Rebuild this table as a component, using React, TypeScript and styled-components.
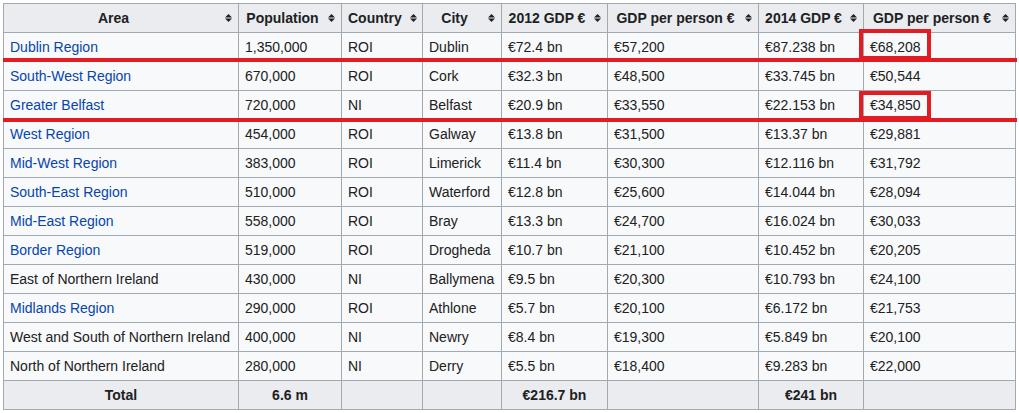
import React from 'react';
import styled, { createGlobalStyle } from 'styled-components';

const GlobalStyle = createGlobalStyle`
  html, body {
    margin: 0;
    padding: 0;
    background: #ffffff;
  }
  body {
    font-family: "Liberation Sans", Arial, sans-serif;
    font-size: 14px;
    color: #202122;
  }
`;

type Row = {
  area: string;
  link: boolean;
  pop: string;
  country: string;
  city: string;
  gdp12: string;
  pp12: string;
  gdp14: string;
  pp14: string;
};

const rows: Row[] = [
  { area: 'Dublin Region', link: true, pop: '1,350,000', country: 'ROI', city: 'Dublin', gdp12: '€72.4 bn', pp12: '€57,200', gdp14: '€87.238 bn', pp14: '€68,208' },
  { area: 'South-West Region', link: true, pop: '670,000', country: 'ROI', city: 'Cork', gdp12: '€32.3 bn', pp12: '€48,500', gdp14: '€33.745 bn', pp14: '€50,544' },
  { area: 'Greater Belfast', link: true, pop: '720,000', country: 'NI', city: 'Belfast', gdp12: '€20.9 bn', pp12: '€33,550', gdp14: '€22.153 bn', pp14: '€34,850' },
  { area: 'West Region', link: true, pop: '454,000', country: 'ROI', city: 'Galway', gdp12: '€13.8 bn', pp12: '€31,500', gdp14: '€13.37 bn', pp14: '€29,881' },
  { area: 'Mid-West Region', link: true, pop: '383,000', country: 'ROI', city: 'Limerick', gdp12: '€11.4 bn', pp12: '€30,300', gdp14: '€12.116 bn', pp14: '€31,792' },
  { area: 'South-East Region', link: true, pop: '510,000', country: 'ROI', city: 'Waterford', gdp12: '€12.8 bn', pp12: '€25,600', gdp14: '€14.044 bn', pp14: '€28,094' },
  { area: 'Mid-East Region', link: true, pop: '558,000', country: 'ROI', city: 'Bray', gdp12: '€13.3 bn', pp12: '€24,700', gdp14: '€16.024 bn', pp14: '€30,033' },
  { area: 'Border Region', link: true, pop: '519,000', country: 'ROI', city: 'Drogheda', gdp12: '€10.7 bn', pp12: '€21,100', gdp14: '€10.452 bn', pp14: '€20,205' },
  { area: 'East of Northern Ireland', link: false, pop: '430,000', country: 'NI', city: 'Ballymena', gdp12: '€9.5 bn', pp12: '€20,300', gdp14: '€10.793 bn', pp14: '€24,100' },
  { area: 'Midlands Region', link: true, pop: '290,000', country: 'ROI', city: 'Athlone', gdp12: '€5.7 bn', pp12: '€20,100', gdp14: '€6.172 bn', pp14: '€21,753' },
  { area: 'West and South of Northern Ireland', link: false, pop: '400,000', country: 'NI', city: 'Newry', gdp12: '€8.4 bn', pp12: '€19,300', gdp14: '€5.849 bn', pp14: '€20,100' },
  { area: 'North of Northern Ireland', link: false, pop: '280,000', country: 'NI', city: 'Derry', gdp12: '€5.5 bn', pp12: '€18,400', gdp14: '€9.283 bn', pp14: '€22,000' },
];

const headers = ['Area', 'Population', 'Country', 'City', '2012 GDP €', 'GDP per person €', '2014 GDP €', 'GDP per person €'];
const widths = [235, 103, 81, 79, 106, 151, 105, 152];
const totals = ['Total', '6.6 m', '', '', '€216.7 bn', '', '€241 bn', ''];

const Page = styled.div`
  position: relative;
  padding: 3px 0 0 3px;
`;

const Table = styled.table`
  border-collapse: collapse;
  table-layout: fixed;
  width: 1013px;
  background: #f8f9fa;
  border: 1px solid #a2a9b1;
`;

const Col = styled.col<{ $w: number }>`
  width: ${(p) => p.$w}px;
`;

const Th = styled.th`
  background: #eaecf0;
  border: 1px solid #a2a9b1;
  padding: 3px 6px;
  height: 22px;
  line-height: 22px;
  font-weight: bold;
  white-space: nowrap;
`;

const HeadInner = styled.div`
  display: flex;
  align-items: center;
`;

const HeadLabel = styled.span`
  flex: 1;
  text-align: center;
`;

const SortIcon = styled.svg`
  flex: none;
  width: 7px;
  height: 8px;
  margin-left: 8px;
`;

const Td = styled.td`
  border: 1px solid #a2a9b1;
  padding: 3px 6px;
  height: 22px;
  line-height: 22px;
  white-space: nowrap;
  overflow: hidden;
`;

const TotalCell = styled.th`
  background: #eaecf0;
  border: 1px solid #a2a9b1;
  padding: 3px 6px;
  height: 22px;
  line-height: 22px;
  font-weight: bold;
  text-align: center;
`;

const Link = styled.a`
  color: #0645ad;
  text-decoration: none;
`;

const RedLine = styled.div<{ $top: number }>`
  position: absolute;
  left: 3px;
  top: ${(p) => p.$top}px;
  width: 1014px;
  height: 4px;
  background: #e31b23;
`;

const RedBox = styled.div<{ $top: number; $h: number }>`
  position: absolute;
  left: 859px;
  top: ${(p) => p.$top}px;
  width: 72px;
  height: ${(p) => p.$h}px;
  box-sizing: border-box;
  border: 4px solid #e31b23;
`;

function Sort() {
  return (
    <SortIcon viewBox="0 0 7 8">
      <polygon points="0,3.4 3.5,0 7,3.4" fill="#202122" />
      <polygon points="0,4.6 3.5,8 7,4.6" fill="#202122" />
    </SortIcon>
  );
}

export default function App() {
  return (
    <>
      <GlobalStyle />
      <Page>
        <Table>
          <colgroup>
            {widths.map((w, i) => (
              <Col key={i} $w={w} />
            ))}
          </colgroup>
          <thead>
            <tr>
              {headers.map((h, i) => (
                <Th key={i}>
                  <HeadInner>
                    <HeadLabel>{h}</HeadLabel>
                    <Sort />
                  </HeadInner>
                </Th>
              ))}
            </tr>
          </thead>
          <tbody>
            {rows.map((r) => (
              <tr key={r.area}>
                <Td>{r.link ? <Link href="#">{r.area}</Link> : r.area}</Td>
                <Td>{r.pop}</Td>
                <Td>{r.country}</Td>
                <Td>{r.city}</Td>
                <Td>{r.gdp12}</Td>
                <Td>{r.pp12}</Td>
                <Td>{r.gdp14}</Td>
                <Td>{r.pp14}</Td>
              </tr>
            ))}
            <tr>
              {totals.map((t, i) => (
                <TotalCell key={i}>{t}</TotalCell>
              ))}
            </tr>
          </tbody>
        </Table>
        <RedLine $top={58} />
        <RedLine $top={118} />
        <RedBox $top={29} $h={31} />
        <RedBox $top={91} $h={29} />
      </Page>
    </>
  );
}
